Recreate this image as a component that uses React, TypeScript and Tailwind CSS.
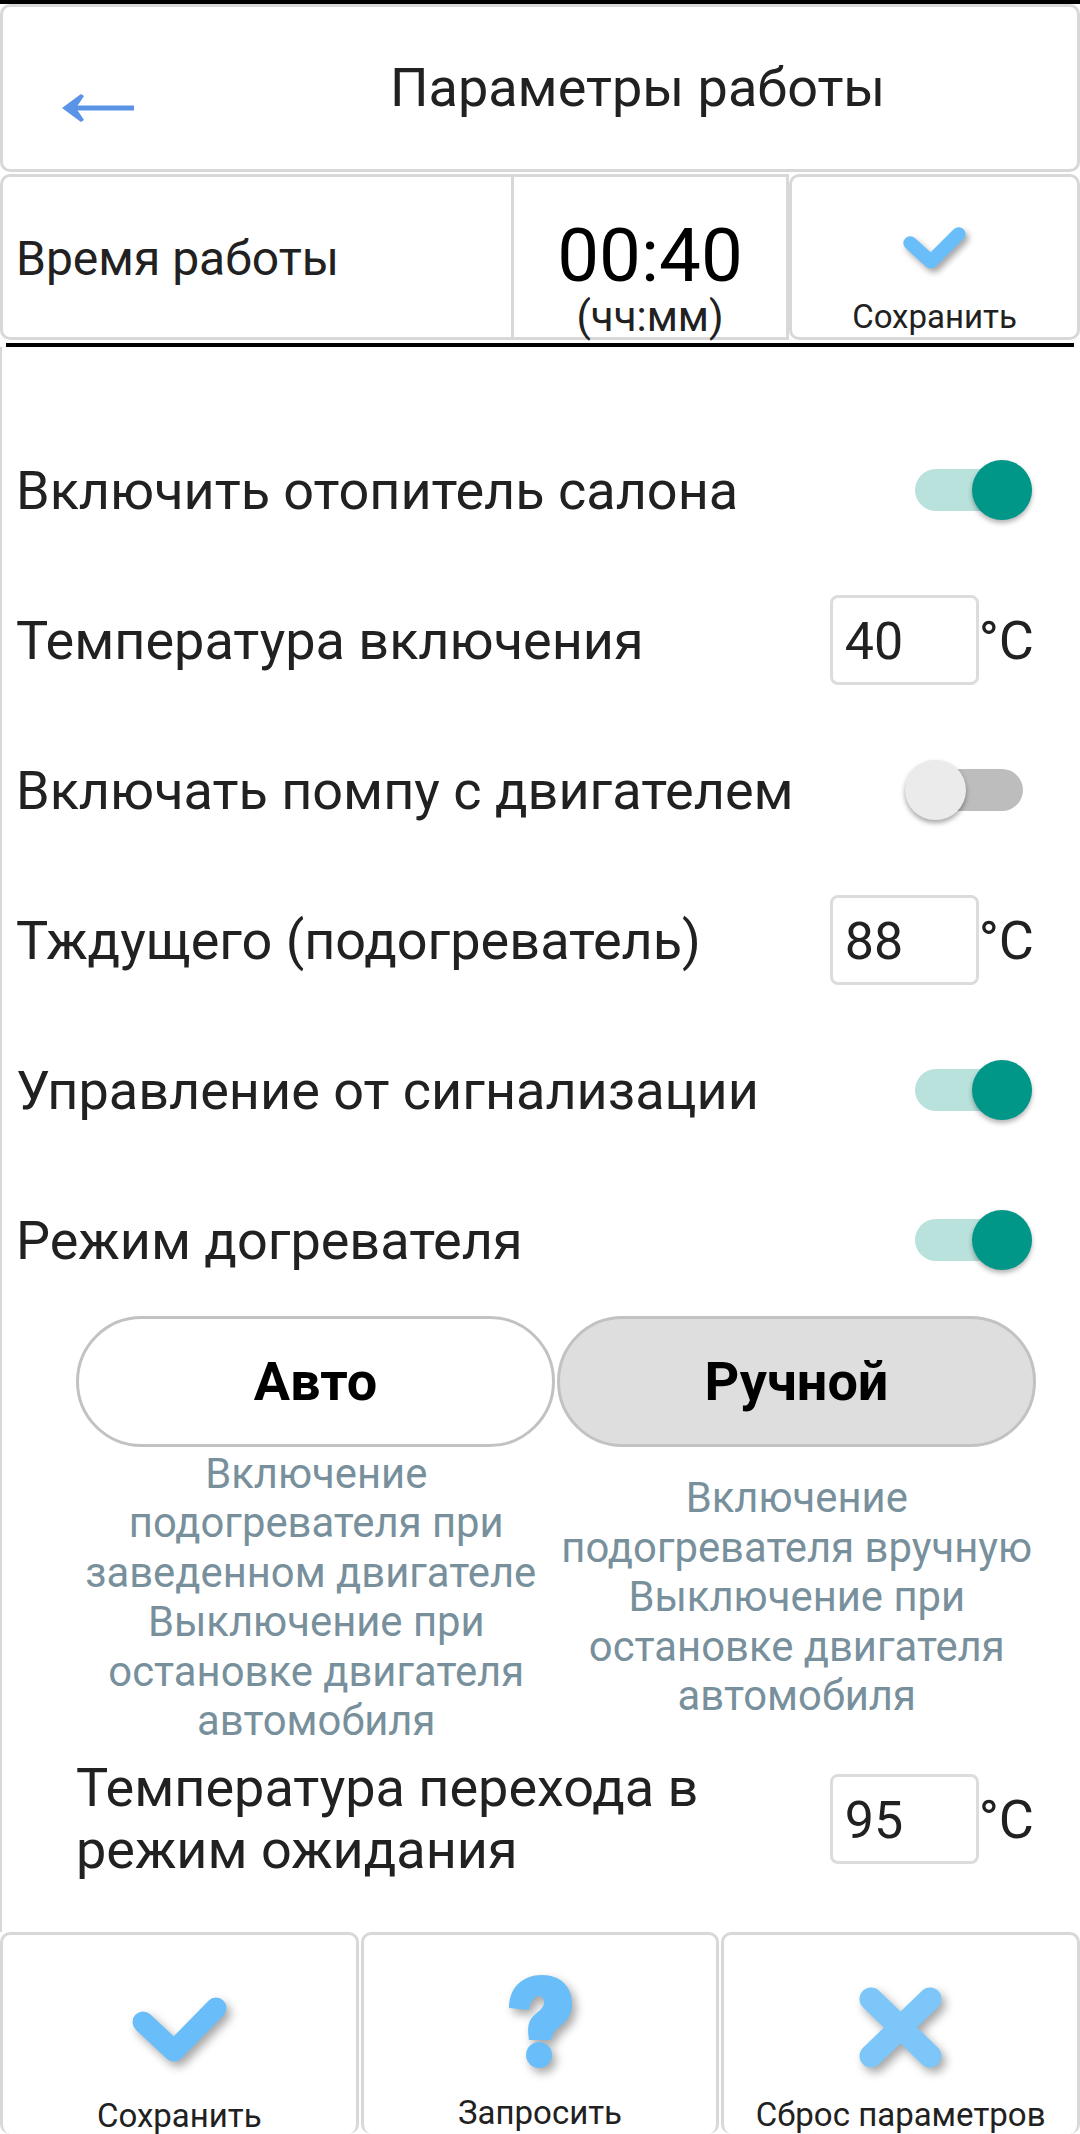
import React from 'react';

const font = { fontFamily: 'Roboto, sans-serif' };

const CheckIcon: React.FC<{ className: string }> = ({ className }) => (
  <svg className={className} viewBox="0 0 95 70" fill="none" preserveAspectRatio="none">
    <path d="M11 25 L42 54 L84 11" stroke="#69bef9" strokeWidth="21" strokeLinecap="round" strokeLinejoin="round" />
  </svg>
);

const Toggle: React.FC<{ on: boolean }> = ({ on }) =>
  on ? (
    <div className="relative w-[117px] h-[42px] rounded-full bg-[#b9e2dd] mr-[2px]">
      <div className="absolute right-0 top-[-9px] w-[60px] h-[60px] rounded-full bg-[#009688] shadow-[0_3px_5px_rgba(0,0,0,0.3)]" />
    </div>
  ) : (
    <div className="relative w-[108px] h-[42px] rounded-full bg-[#bdbdbd] mr-[11px]">
      <div className="absolute left-[-10px] top-[-9px] w-[61px] h-[60px] rounded-full bg-[#ebebeb] shadow-[0_3px_5px_rgba(0,0,0,0.35)]" />
    </div>
  );

const TempInput: React.FC<{ value: string }> = ({ value }) => (
  <div className="flex items-center">
    <div className="w-[149px] h-[90px] rounded-[8px] border-[3px] border-[#dcdcdc] flex items-center pl-[12px] pt-[3px] text-[52px] text-[#212121]">
      {value}
    </div>
    <span className="text-[54px] text-[#212121] whitespace-nowrap">°C</span>
  </div>
);

const Row: React.FC<{ label: string; children: React.ReactNode }> = ({ label, children }) => (
  <div className="h-[150px] flex items-center justify-between pl-[14px] pr-[46px]">
    <span className="text-[54px] text-[#212121]">{label}</span>
    {children}
  </div>
);

const FooterButton: React.FC<{ label: string; labelClass: string; children: React.ReactNode }> = ({ label, labelClass, children }) => (
  <div className="flex-1 h-full rounded-[10px] border-[3px] border-b-0 border-[#d8d8d8] flex flex-col items-center overflow-hidden">
    {children}
    <span className={`leading-[38px] text-[33px] text-[#212121] whitespace-nowrap ${labelClass}`}>{label}</span>
  </div>
);

export default function App() {
  return (
    <div style={font} className="w-[1080px] h-[2134px] bg-white overflow-hidden flex flex-col border-t-[4px] border-black">
      <div className="h-[168px] rounded-[10px] border-[3px] border-[#d8d8d8] flex items-start">
        <svg className="w-[72px] h-[30px] ml-[59px] mt-[86px] shrink-0" viewBox="0 0 72 30" fill="#5b93e6">
          <path d="M14 12.5 H72 V17.5 H14 Z" />
          <path d="M0 15 L19 1 L22 3 L14 15 L22 27 L19 29 Z" />
        </svg>
        <span className="text-[54px] leading-[64px] text-[#212121] mt-[49px] ml-[256px] whitespace-nowrap">Параметры работы</span>
      </div>

      <div className="h-[166px] flex mt-[2px]">
        <div className="w-[511px] rounded-l-[10px] border-[3px] border-r-0 border-[#d8d8d8] flex items-center pl-[13px] pt-[4px] text-[48px] text-[#212121]">
          Время работы
        </div>
        <div className="w-[278px] border-[3px] border-[#d8d8d8] flex flex-col items-center text-black">
          <span className="text-[74.5px] leading-[80px] mt-[39px]">00:40</span>
          <span className="text-[42px] leading-[42px] text-[#212121]">(чч:мм)</span>
        </div>
        <div className="flex-1 rounded-[10px] border-[3px] border-[#d8d8d8] flex flex-col items-center">
          <CheckIcon className="w-[63px] h-[45px] mt-[50px] shrink-0 drop-shadow-[3px_4px_3px_rgba(0,0,0,0.35)]" />
          <span className="text-[33px] leading-[40px] text-[#212121] mt-[25px]">Сохранить</span>
        </div>
      </div>

      <div className="h-[4px] bg-black mx-[6px] mt-[3px]" />

      <div className="flex-1 flex flex-col border-l-[2px] border-[#d8d8d8]">
        <div className="h-[68px]" />
        <Row label="Включить отопитель салона"><Toggle on /></Row>
        <Row label="Температура включения"><TempInput value="40" /></Row>
        <Row label="Включать помпу с двигателем"><Toggle on={false} /></Row>
        <Row label="Тждущего (подогреватель)"><TempInput value="88" /></Row>
        <Row label="Управление от сигнализации"><Toggle on /></Row>
        <Row label="Режим догревателя"><Toggle on /></Row>

        <div className="flex pl-[74px] pr-[44px] gap-[2px] mt-[1px]">
          <div className="flex-1 h-[131px] rounded-[66px] border-[3px] border-[#c2c2c2] flex items-center justify-center text-[54px] font-bold text-black">
            Авто
          </div>
          <div className="flex-1 h-[131px] rounded-[66px] border-[3px] border-[#c2c2c2] bg-[#dedede] flex items-center justify-center text-[54px] font-bold text-black">
            Ручной
          </div>
        </div>

        <div className="flex pl-[74px] pr-[44px] gap-[2px] text-[41.8px] leading-[49.5px] text-[#78909c] text-center h-[300px]">
          <div className="flex-1 flex items-center justify-center whitespace-nowrap ml-[1px]">
            <div>Включение<br />подогревателя при<br /><span className="inline-block -ml-[11px]">заведенном двигателе</span><br />Выключение при<br />остановке двигателя<br />автомобиля</div>
          </div>
          <div className="flex-1 flex items-center justify-center whitespace-nowrap">
            <div>Включение<br />подогревателя вручную<br />Выключение при<br />остановке двигателя<br />автомобиля</div>
          </div>
        </div>

        <div className="flex items-center justify-between pl-[74px] pr-[46px] h-[144px]">
          <span className="text-[54px] leading-[62px] text-[#212121]">Температура перехода в<br />режим ожидания</span>
          <TempInput value="95" />
        </div>
      </div>

      <div className="h-[202px] flex gap-[2px]">
        <FooterButton label="Сохранить" labelClass="mt-[30px]">
          <CheckIcon className="w-[95px] h-[70px] mt-[62px] shrink-0 drop-shadow-[4px_5px_5px_rgba(0,0,0,0.35)]" />
        </FooterButton>
        <FooterButton label="Запросить" labelClass="mt-[26px]">
          <svg className="w-[63px] h-[93px] mt-[40px] shrink-0 drop-shadow-[4px_5px_5px_rgba(0,0,0,0.35)]" viewBox="0 0 63 93" fill="#69bef9">
            <path d="M0 33 C0 12 14 0 33 0 C52 0 63 12 63 29 C63 44 52 50 46 56 C44 59 43 61 42 65 L20 65 C19 58 18 50 22 44 C27 37 36 34 35 26 C34 21 30 20 27 22 C23 24 21 29 20 35 Z" />
            <ellipse cx="30" cy="80" rx="13" ry="13" />
          </svg>
        </FooterButton>
        <FooterButton label="Сброс параметров" labelClass="mt-[28px]">
          <svg className="w-[83px] h-[81px] mt-[52px] shrink-0 drop-shadow-[4px_5px_5px_rgba(0,0,0,0.35)]" viewBox="0 0 83 81" fill="none">
            <path d="M12 12 L71 69 M71 12 L12 69" stroke="#7cc6fa" strokeWidth="23" strokeLinecap="round" />
          </svg>
        </FooterButton>
      </div>
    </div>
  );
}
